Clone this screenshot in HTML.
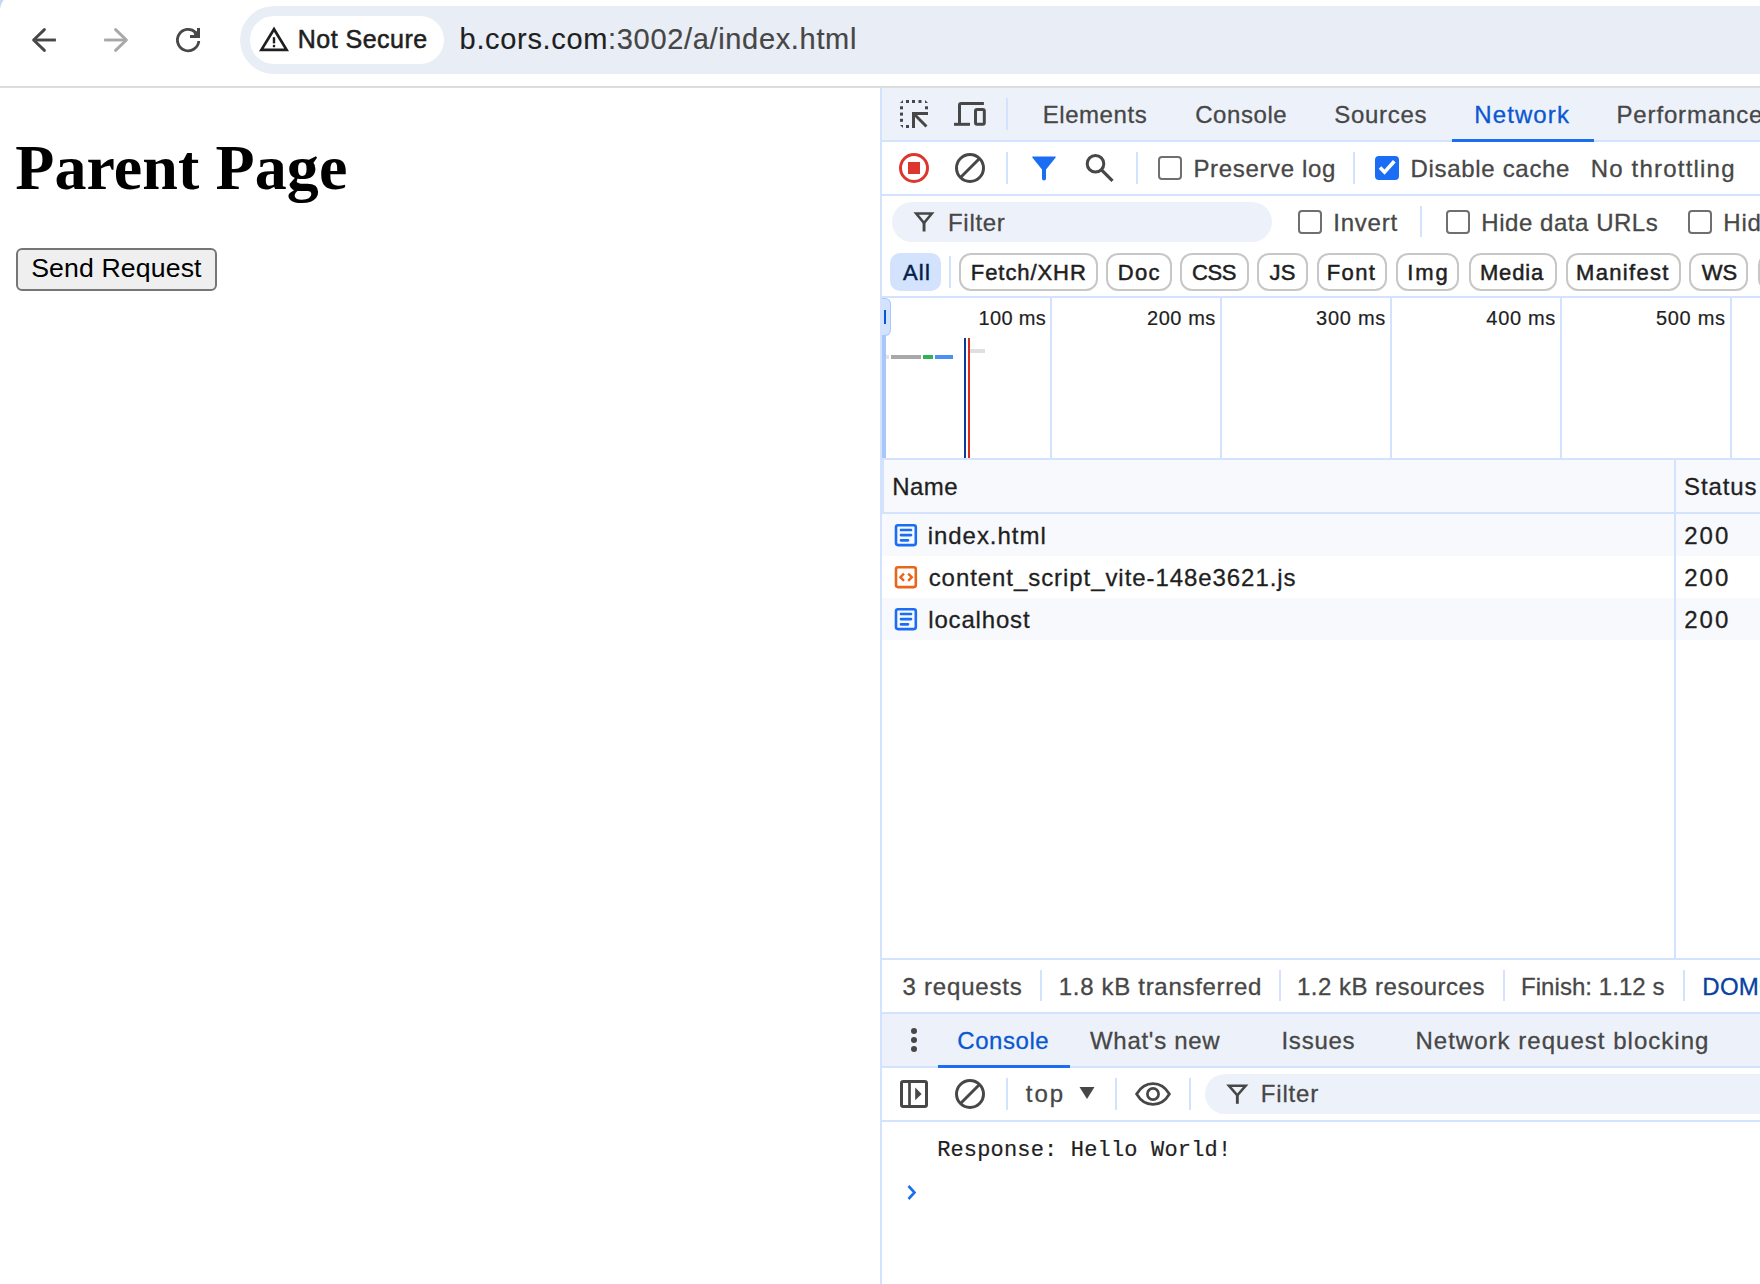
<!DOCTYPE html>
<html><head><meta charset="utf-8">
<style>
html,body{margin:0;padding:0;width:1760px;height:1284px;overflow:hidden;background:#fff;position:relative;font-family:"Liberation Sans",sans-serif;}
.a{position:absolute;}
.t{position:absolute;white-space:pre;line-height:1;font-family:"Liberation Sans",sans-serif;}
.hl{position:absolute;height:2px;background:#d3e3fd;}
.vl{position:absolute;width:2px;background:#d3e3fd;}
.sep{position:absolute;width:2px;height:32px;background:#d3e3fd;}
.cb{position:absolute;width:20px;height:20px;border:2px solid #6f6f6f;border-radius:4px;box-sizing:content-box;}
.chip{position:absolute;top:253px;height:34px;border:2px solid #c7c7c7;border-radius:12px;box-sizing:content-box;}
svg{position:absolute;overflow:visible;}
</style></head><body>

<!-- ===== Browser toolbar ===== -->
<svg style="left:0;top:0" width="10" height="10"><path d="M0 9Q0.6 3.5 3.6 0H0Z" fill="#c2d6f7"/></svg>
<div class="a" style="left:0;top:86px;width:1760px;height:2px;background:#dcdedd;"></div>
<div class="a" style="left:240px;top:6px;width:1600px;height:68px;border-radius:34px;background:#e9eef6;"></div>
<div class="a" style="left:250px;top:16px;width:194px;height:48px;border-radius:24px;background:#fff;"></div>
<svg style="left:0;top:0" width="300" height="86">
  <g fill="none" stroke="#474747" stroke-width="2.9" stroke-linecap="round" stroke-linejoin="round"><path d="M55.9 40H36" stroke-linecap="butt"/><path d="M44.4 29.6L33.6 40L44.4 50.4"/></g>
  <g fill="none" stroke="#a8a8a8" stroke-width="2.9" stroke-linecap="round" stroke-linejoin="round"><path d="M104.1 40H124" stroke-linecap="butt"/><path d="M115.6 29.6L126.4 40L115.6 50.4"/></g>
  <path d="M198.8 41A10.7 10.7 0 1 1 195.6 32.4" fill="none" stroke="#474747" stroke-width="2.8"/>
  <path d="M197 28H200V38H190V35H194.5L193.5 33.5L197 31Z" fill="#474747"/>
  <path d="M274 29.2L261.4 49.9H286.6Z" fill="none" stroke="#1f1f1f" stroke-width="2.7" stroke-linejoin="miter"/>
  <rect x="272.8" y="37.2" width="2.4" height="6.2" fill="#1f1f1f"/>
  <circle cx="274" cy="46.1" r="1.3" fill="#1f1f1f"/>
</svg>

<!-- ===== Page content ===== -->
<div class="a" style="left:16px;top:248px;width:197px;height:39px;border:2px solid #767676;border-radius:6px;background:#efefef;"></div>

<!-- ===== DevTools ===== -->
<div class="a" style="left:880px;top:88px;width:2px;height:1196px;background:#d3e3fd;"></div>
<!-- main tab bar -->
<div class="a" style="left:882px;top:88px;width:878px;height:52px;background:#edf2fa;"></div>
<div class="hl" style="left:882px;top:140px;width:878px;"></div>
<div class="a" style="left:1452px;top:138.8px;width:142px;height:3.2px;background:#1b6ef3;"></div>
<div class="sep" style="left:1006px;top:98px;"></div>
<svg style="left:0;top:0" width="1000" height="140">
  <g fill="#474747">
    <path d="M900 103L903 100V103Z"/>
    <rect x="906" y="100" width="3" height="3"/><rect x="912" y="100" width="3" height="3"/><rect x="918.5" y="100" width="3" height="3"/>
    <path d="M925 100L928 103H925Z"/>
    <rect x="925" y="106.3" width="3" height="3"/>
    <rect x="900" y="106.3" width="3" height="3"/><rect x="900" y="112.6" width="3" height="3"/><rect x="900" y="118.8" width="3" height="3"/>
    <path d="M900 125H903V128Z"/>
    <rect x="906" y="125" width="3" height="3"/>
    <path d="M912 112H928V115H917.1L927.5 125.4L925.4 127.5L915 117.1V128H912Z"/>
  </g>
  <g fill="none" stroke="#474747" stroke-width="3">
    <path d="M983.9 103.5H961.3Q959.5 103.5 959.5 105.3V124.3"/>
    <path d="M954 124.3H970"/>
    <rect x="975.5" y="109.5" width="8.8" height="14.8" rx="1.5"/>
  </g>
</svg>

<!-- network toolbar -->
<div class="hl" style="left:882px;top:194px;width:878px;"></div>
<div class="sep" style="left:1006px;top:152px;"></div>
<div class="sep" style="left:1136px;top:152px;"></div>
<div class="sep" style="left:1353px;top:152px;"></div>
<svg style="left:0;top:0" width="1420" height="200">
  <circle cx="914" cy="168" r="13.5" fill="none" stroke="#dc362e" stroke-width="3"/>
  <rect x="908" y="162" width="12" height="12" fill="#dc362e"/>
  <circle cx="970" cy="168" r="13.5" fill="none" stroke="#474747" stroke-width="3"/>
  <path d="M960.5 177.5L979.5 158.5" stroke="#474747" stroke-width="3"/>
  <path d="M1033 156.5H1055Q1056.5 156.5 1055.5 157.8L1046 169.5V178.5Q1046 180.5 1044 180.5Q1042 180.5 1042 178.5V169.5L1032.5 157.8Q1031.5 156.5 1033 156.5Z" fill="#1b6ef3"/>
  <circle cx="1095.5" cy="163.8" r="8.3" fill="none" stroke="#474747" stroke-width="3"/>
  <path d="M1101.5 169.8L1112.5 180.8" stroke="#474747" stroke-width="3.2"/>
  <rect x="1375" y="156" width="24" height="24" rx="4" fill="#1b6ef3"/>
  <path d="M1380 167.6L1384.5 172.1L1394.3 161.2" fill="none" stroke="#fff" stroke-width="3.6"/>
</svg>
<div class="cb" style="left:1158px;top:156px;"></div>

<!-- filter row -->
<div class="a" style="left:892px;top:202px;width:380px;height:40px;border-radius:20px;background:#edf2fa;"></div>
<svg style="left:0;top:0" width="940" height="240">
  <path d="M916.2 213.5H931.8L924 223Z" fill="none" stroke="#474747" stroke-width="2.6" stroke-linejoin="miter"/>
  <rect x="922.6" y="222" width="2.9" height="9.5" fill="#474747"/>
</svg>
<div class="cb" style="left:1298px;top:210px;"></div>
<div class="sep" style="left:1420px;top:206px;height:31px;"></div>
<div class="cb" style="left:1446px;top:210px;"></div>
<div class="cb" style="left:1688px;top:210px;"></div>

<!-- chips -->
<div class="a" style="left:890px;top:253px;width:51px;height:38px;border-radius:10px;background:#d3e3fd;"></div>
<div class="sep" style="left:949px;top:256px;"></div>
<div class="chip" style="left:959.2px;width:134.70px;"></div>
<div class="chip" style="left:1106.25px;width:61.25px;"></div>
<div class="chip" style="left:1180.25px;width:64.25px;"></div>
<div class="chip" style="left:1257.25px;width:46.50px;"></div>
<div class="chip" style="left:1316.8px;width:66.40px;"></div>
<div class="chip" style="left:1396.25px;width:59.15px;"></div>
<div class="chip" style="left:1468.5px;width:84.00px;"></div>
<div class="chip" style="left:1565.5px;width:111.00px;"></div>
<div class="chip" style="left:1689.3px;width:55.20px;"></div>
<div class="chip" style="left:1757.5px;width:88.50px;"></div>
<div class="hl" style="left:882px;top:296px;width:878px;"></div>

<!-- overview -->
<div class="vl" style="left:1050px;top:298px;height:160px;"></div>
<div class="vl" style="left:1220px;top:298px;height:160px;"></div>
<div class="vl" style="left:1390px;top:298px;height:160px;"></div>
<div class="vl" style="left:1560px;top:298px;height:160px;"></div>
<div class="vl" style="left:1730px;top:298px;height:160px;"></div>
<div class="a" style="left:882px;top:335px;width:4px;height:123px;background:#a8c7fa;"></div>
<div class="a" style="left:882px;top:298px;width:8px;height:36px;background:#d3e3fd;border:1.5px solid #a8c7fa;border-left:none;border-radius:0 6px 6px 0;"></div>
<div class="a" style="left:884px;top:310px;width:2px;height:14px;background:#0b57d0;"></div>
<div class="a" style="left:886px;top:355px;width:3px;height:4px;background:#e3e3e3;"></div>
<div class="a" style="left:891px;top:355px;width:30px;height:4px;background:#a8a8a8;"></div>
<div class="a" style="left:923px;top:355px;width:10px;height:4px;background:#2eb35a;"></div>
<div class="a" style="left:935px;top:355px;width:18px;height:4px;background:#4e8ff7;"></div>
<div class="a" style="left:968px;top:349px;width:17px;height:4px;background:#dde0de;"></div>
<div class="a" style="left:964px;top:338px;width:2px;height:120px;background:#0c3c9b;"></div>
<div class="a" style="left:968px;top:338px;width:2px;height:120px;background:#dc2b1e;"></div>
<div class="hl" style="left:882px;top:458px;width:878px;"></div>

<!-- table -->
<div class="a" style="left:882px;top:460px;width:878px;height:52px;background:#f8f9fd;"></div>
<div class="hl" style="left:882px;top:512px;width:878px;"></div>
<div class="vl" style="left:882px;top:460px;height:52px;"></div>
<div class="a" style="left:882px;top:514px;width:878px;height:42px;background:#f7f9fd;"></div>
<div class="a" style="left:882px;top:598px;width:878px;height:42px;background:#f7f9fd;"></div>
<div class="vl" style="left:1674px;top:460px;height:498px;"></div>
<svg style="left:0;top:0" width="930" height="660">
  <g fill="none" stroke="#1b6ef3" stroke-width="2.6">
    <rect x="896" y="525.3" width="19.8" height="19.8" rx="2"/>
    <rect x="896" y="609.3" width="19.8" height="19.8" rx="2"/>
  </g>
  <g fill="none" stroke="#e8651a" stroke-width="2.6">
    <rect x="896" y="567.3" width="19.8" height="19.8" rx="2"/>
  </g>
  <g fill="none" stroke="#1b6ef3" stroke-width="2.7" stroke-linecap="round">
    <path d="M901 530H911M901 535.1H911M901 540.3H908"/>
    <path d="M901 614H911M901 619.1H911M901 624.3H908"/>
  </g>
  <g fill="none" stroke="#e8651a" stroke-width="2.4">
    <path d="M904 573.6L900.4 577.2L904 580.8M908.2 573.6L911.8 577.2L908.2 580.8"/>
  </g>
</svg>
<div class="hl" style="left:882px;top:958px;width:878px;"></div>

<!-- summary -->
<div class="sep" style="left:1040px;top:970px;height:31px;"></div>
<div class="sep" style="left:1279px;top:970px;height:31px;"></div>
<div class="sep" style="left:1503px;top:970px;height:31px;"></div>
<div class="sep" style="left:1683px;top:970px;height:31px;"></div>
<div class="hl" style="left:882px;top:1012px;width:878px;"></div>

<!-- drawer -->
<div class="a" style="left:1205px;top:1074px;width:600px;height:40px;border-radius:20px;background:#edf2fa;"></div>

<div class="a" style="left:882px;top:1014px;width:878px;height:52px;background:#edf2fa;"></div>
<div class="hl" style="left:882px;top:1066px;width:878px;"></div>
<div class="a" style="left:938px;top:1064.8px;width:132px;height:3.2px;background:#1b6ef3;"></div>
<svg style="left:0;top:0" width="1400" height="1284">
  <g fill="#474747">
    <circle cx="914" cy="1031" r="3"/><circle cx="914" cy="1040" r="3"/><circle cx="914" cy="1049" r="3"/>
  </g>
  <g fill="none" stroke="#474747" stroke-width="3">
    <rect x="901.5" y="1081.5" width="25" height="25" rx="1.8"/>
    <path d="M909.5 1081.5V1106.5" stroke-width="2.7"/>
    <circle cx="970" cy="1094" r="13.5"/>
    <path d="M960.5 1103.5L979.5 1084.5"/>
    <path d="M1136.6 1094C1141 1086.5 1147 1083.6 1153 1083.6C1159 1083.6 1165 1086.5 1169.4 1094C1165 1101.5 1159 1104.4 1153 1104.4C1147 1104.4 1141 1101.5 1136.6 1094Z" stroke-width="2.7"/>
    <circle cx="1153" cy="1094" r="5.6" stroke-width="2.7"/>
  </g>
  <path d="M915.2 1087.6L921.6 1093.9L915.2 1100.2Z" fill="#474747"/>
  <path d="M1079.5 1087H1094.5L1087 1099Z" fill="#474747"/>
  <path d="M1229 1085.8H1245.6L1237.3 1095.3Z" fill="none" stroke="#474747" stroke-width="2.6" stroke-linejoin="miter"/>
  <rect x="1235.9" y="1094.3" width="2.9" height="9.5" fill="#474747"/>
  <path d="M908.5 1186L914.5 1192.5L908.5 1199" fill="none" stroke="#1b6ef3" stroke-width="2.6"/>
</svg>
<div class="sep" style="left:1006px;top:1078px;"></div>
<div class="sep" style="left:1115px;top:1078px;"></div>
<div class="sep" style="left:1189px;top:1078px;"></div>
<div class="hl" style="left:882px;top:1120px;width:878px;"></div>

<div class="t" style="left:297.79px;top:27.23px;font-size:25px;color:#1f1f1f;letter-spacing:0.484px;-webkit-text-stroke:0.55px #1f1f1f;">Not Secure</div>
<div class="t" style="left:459.62px;top:25.45px;font-size:29px;color:#1f1f1f;letter-spacing:0.665px;-webkit-text-stroke:0.15px #1f1f1f;">b.cors.com<span style="color:#474747">:3002/a/index.html</span></div>
<div class="t" style="left:15.20px;top:135.50px;font-size:64px;color:#000;font-family:'Liberation Serif',serif;font-weight:700;letter-spacing:0.104px;">Parent Page</div>
<div class="t" style="left:31.20px;top:255.32px;font-size:26.67px;color:#000;letter-spacing:0.127px;">Send Request</div>
<div class="t" style="left:1042.73px;top:102.98px;font-size:24px;color:#474747;letter-spacing:0.552px;-webkit-text-stroke:0.3px #474747;">Elements</div>
<div class="t" style="left:1195.23px;top:102.98px;font-size:24px;color:#474747;letter-spacing:0.561px;-webkit-text-stroke:0.3px #474747;">Console</div>
<div class="t" style="left:1334.26px;top:102.98px;font-size:24px;color:#474747;letter-spacing:0.701px;-webkit-text-stroke:0.3px #474747;">Sources</div>
<div class="t" style="left:1474.25px;top:102.98px;font-size:24px;color:#0b57d0;letter-spacing:1.107px;-webkit-text-stroke:0.3px #0b57d0;">Network</div>
<div class="t" style="left:1616.51px;top:102.98px;font-size:24px;color:#474747;letter-spacing:0.850px;-webkit-text-stroke:0.3px #474747;">Performance</div>
<div class="t" style="left:1193.41px;top:156.58px;font-size:24px;color:#474747;letter-spacing:0.665px;-webkit-text-stroke:0.3px #474747;">Preserve log</div>
<div class="t" style="left:1410.41px;top:156.58px;font-size:24px;color:#474747;letter-spacing:0.693px;-webkit-text-stroke:0.3px #474747;">Disable cache</div>
<div class="t" style="left:1590.65px;top:156.58px;font-size:24px;color:#474747;letter-spacing:1.203px;-webkit-text-stroke:0.3px #474747;">No throttling</div>
<div class="t" style="left:948.03px;top:210.58px;font-size:24px;color:#474747;letter-spacing:0.692px;-webkit-text-stroke:0.3px #474747;">Filter</div>
<div class="t" style="left:1333.32px;top:210.58px;font-size:24px;color:#474747;letter-spacing:0.749px;-webkit-text-stroke:0.3px #474747;">Invert</div>
<div class="t" style="left:1481.36px;top:210.58px;font-size:24px;color:#474747;letter-spacing:0.537px;-webkit-text-stroke:0.3px #474747;">Hide data URLs</div>
<div class="t" style="left:1723.33px;top:210.58px;font-size:24px;color:#474747;letter-spacing:0.800px;-webkit-text-stroke:0.3px #474747;">Hide extension URLs</div>
<div class="t" style="left:902.95px;top:261.57px;font-size:22px;color:#041e49;letter-spacing:1.195px;-webkit-text-stroke:0.5px #041e49;">All</div>
<div class="t" style="left:970.85px;top:261.57px;font-size:22px;color:#1f1f1f;letter-spacing:0.917px;-webkit-text-stroke:0.5px #1f1f1f;">Fetch/XHR</div>
<div class="t" style="left:1117.68px;top:261.57px;font-size:22px;color:#1f1f1f;letter-spacing:1.378px;-webkit-text-stroke:0.5px #1f1f1f;">Doc</div>
<div class="t" style="left:1191.97px;top:261.57px;font-size:22px;color:#1f1f1f;letter-spacing:-0.335px;-webkit-text-stroke:0.5px #1f1f1f;">CSS</div>
<div class="t" style="left:1269.59px;top:261.57px;font-size:22px;color:#1f1f1f;letter-spacing:0.263px;-webkit-text-stroke:0.5px #1f1f1f;">JS</div>
<div class="t" style="left:1326.85px;top:261.57px;font-size:22px;color:#1f1f1f;letter-spacing:1.311px;-webkit-text-stroke:0.5px #1f1f1f;">Font</div>
<div class="t" style="left:1407.29px;top:261.57px;font-size:22px;color:#1f1f1f;letter-spacing:1.839px;-webkit-text-stroke:0.5px #1f1f1f;">Img</div>
<div class="t" style="left:1479.96px;top:261.57px;font-size:22px;color:#1f1f1f;letter-spacing:0.835px;-webkit-text-stroke:0.5px #1f1f1f;">Media</div>
<div class="t" style="left:1576.05px;top:261.57px;font-size:22px;color:#1f1f1f;letter-spacing:1.311px;-webkit-text-stroke:0.5px #1f1f1f;">Manifest</div>
<div class="t" style="left:1701.87px;top:261.57px;font-size:22px;color:#1f1f1f;letter-spacing:-0.240px;-webkit-text-stroke:0.5px #1f1f1f;">WS</div>
<div class="t" style="left:1768.50px;top:261.57px;font-size:22px;color:#1f1f1f;letter-spacing:0.400px;-webkit-text-stroke:0.5px #1f1f1f;">Wasm</div>
<div class="t" style="left:978.53px;top:307.77px;font-size:20px;color:#1f1f1f;letter-spacing:0.318px;-webkit-text-stroke:0.2px #1f1f1f;">100 ms</div>
<div class="t" style="left:1146.96px;top:307.77px;font-size:20px;color:#1f1f1f;letter-spacing:0.567px;-webkit-text-stroke:0.2px #1f1f1f;">200 ms</div>
<div class="t" style="left:1316.04px;top:307.77px;font-size:20px;color:#1f1f1f;letter-spacing:0.751px;-webkit-text-stroke:0.2px #1f1f1f;">300 ms</div>
<div class="t" style="left:1486.32px;top:307.77px;font-size:20px;color:#1f1f1f;letter-spacing:0.691px;-webkit-text-stroke:0.2px #1f1f1f;">400 ms</div>
<div class="t" style="left:1655.94px;top:307.77px;font-size:20px;color:#1f1f1f;letter-spacing:0.699px;-webkit-text-stroke:0.2px #1f1f1f;">500 ms</div>
<div class="t" style="left:892.23px;top:474.78px;font-size:24px;color:#1f1f1f;letter-spacing:0.468px;-webkit-text-stroke:0.3px #1f1f1f;">Name</div>
<div class="t" style="left:1684.10px;top:474.78px;font-size:24px;color:#1f1f1f;letter-spacing:0.881px;-webkit-text-stroke:0.3px #1f1f1f;">Status</div>
<div class="t" style="left:927.67px;top:523.98px;font-size:24px;color:#1f1f1f;letter-spacing:0.968px;-webkit-text-stroke:0.3px #1f1f1f;">index.html</div>
<div class="t" style="left:1684.15px;top:523.98px;font-size:24px;color:#1f1f1f;letter-spacing:2.077px;-webkit-text-stroke:0.3px #1f1f1f;">200</div>
<div class="t" style="left:928.70px;top:565.98px;font-size:24px;color:#1f1f1f;letter-spacing:0.932px;-webkit-text-stroke:0.3px #1f1f1f;">content_script_vite-148e3621.js</div>
<div class="t" style="left:1684.15px;top:565.98px;font-size:24px;color:#1f1f1f;letter-spacing:2.077px;-webkit-text-stroke:0.3px #1f1f1f;">200</div>
<div class="t" style="left:928.22px;top:607.98px;font-size:24px;color:#1f1f1f;letter-spacing:0.834px;-webkit-text-stroke:0.3px #1f1f1f;">localhost</div>
<div class="t" style="left:1684.15px;top:607.98px;font-size:24px;color:#1f1f1f;letter-spacing:2.077px;-webkit-text-stroke:0.3px #1f1f1f;">200</div>
<div class="t" style="left:902.40px;top:974.68px;font-size:24px;color:#474747;letter-spacing:0.815px;-webkit-text-stroke:0.3px #474747;">3 requests</div>
<div class="t" style="left:1058.76px;top:974.68px;font-size:24px;color:#474747;letter-spacing:0.693px;-webkit-text-stroke:0.3px #474747;">1.8 kB transferred</div>
<div class="t" style="left:1296.98px;top:974.68px;font-size:24px;color:#474747;letter-spacing:0.492px;-webkit-text-stroke:0.3px #474747;">1.2 kB resources</div>
<div class="t" style="left:1521.03px;top:974.68px;font-size:24px;color:#474747;letter-spacing:0.056px;-webkit-text-stroke:0.3px #474747;">Finish: 1.12 s</div>
<div class="t" style="left:1702.37px;top:974.68px;font-size:24px;color:#0842a0;letter-spacing:0.200px;-webkit-text-stroke:0.3px #0842a0;">DOMContentLoaded: 1.11 s</div>
<div class="t" style="left:957.34px;top:1028.88px;font-size:24px;color:#0b57d0;letter-spacing:0.556px;-webkit-text-stroke:0.3px #0b57d0;">Console</div>
<div class="t" style="left:1090.03px;top:1028.88px;font-size:24px;color:#474747;letter-spacing:0.703px;-webkit-text-stroke:0.3px #474747;">What's new</div>
<div class="t" style="left:1281.45px;top:1028.88px;font-size:24px;color:#474747;letter-spacing:0.762px;-webkit-text-stroke:0.3px #474747;">Issues</div>
<div class="t" style="left:1415.41px;top:1028.88px;font-size:24px;color:#474747;letter-spacing:1.023px;-webkit-text-stroke:0.3px #474747;">Network request blocking</div>
<div class="t" style="left:1025.85px;top:1082.48px;font-size:24px;color:#474747;letter-spacing:1.934px;-webkit-text-stroke:0.3px #474747;">top</div>
<div class="t" style="left:1260.73px;top:1082.48px;font-size:24px;color:#474747;letter-spacing:0.835px;-webkit-text-stroke:0.3px #474747;">Filter</div>
<div class="t" style="left:937.14px;top:1139.54px;font-size:22px;color:#1f1f1f;font-family:'Liberation Mono',monospace;letter-spacing:0.167px;-webkit-text-stroke:0.2px #1f1f1f;">Response: Hello World!</div>

</body></html>
